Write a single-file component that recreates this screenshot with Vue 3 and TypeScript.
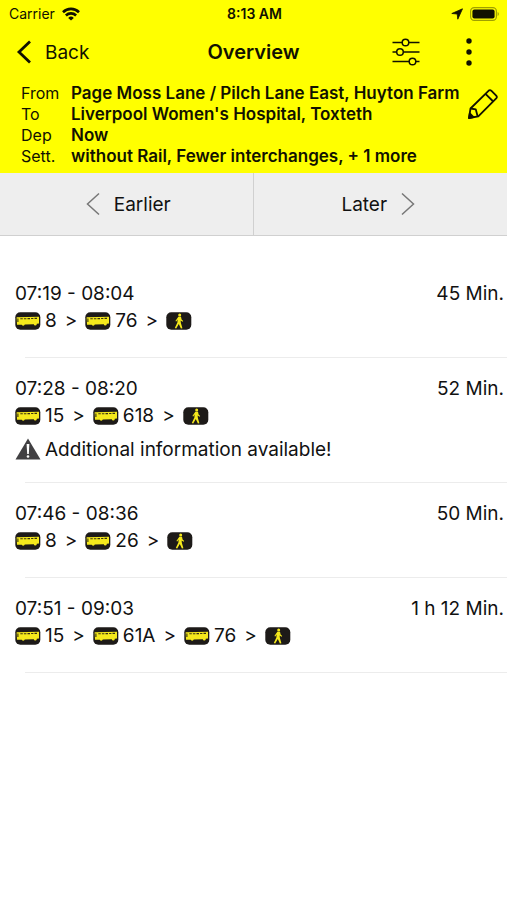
<script setup lang="ts">
interface Leg {
  kind: 'bus' | 'walk'
  line?: string
}
interface Trip {
  times: string
  duration: string
  legs: Leg[]
  notice?: string
}

const bus = (line: string): Leg => ({ kind: 'bus', line })
const walk: Leg = { kind: 'walk' }

const summary = [
  { label: 'From', value: 'Page Moss Lane / Pilch Lane East, Huyton Farm' },
  { label: 'To', value: "Liverpool Women's Hospital, Toxteth" },
  { label: 'Dep', value: 'Now' },
  { label: 'Sett.', value: 'without Rail, Fewer interchanges, + 1 more' },
]

const trips: Trip[] = [
  { times: '07:19 - 08:04', duration: '45 Min.', legs: [bus('8'), bus('76'), walk] },
  {
    times: '07:28 - 08:20',
    duration: '52 Min.',
    legs: [bus('15'), bus('618'), walk],
    notice: 'Additional information available!',
  },
  { times: '07:46 - 08:36', duration: '50 Min.', legs: [bus('8'), bus('26'), walk] },
  { times: '07:51 - 09:03', duration: '1 h 12 Min.', legs: [bus('15'), bus('61A'), bus('76'), walk] },
]
</script>

<template>
  <div class="screen">
    <header class="top">
      <div class="status">
        <div class="status-left">
          <span>Carrier</span>
          <svg width="18" height="14" viewBox="0 0 18 14" fill="none" stroke="#111100" stroke-width="2.6">
            <path d="M1 5.200a11.400 11.400 0 0 1 16 0" />
            <path d="M3.900 8.500a7.300 7.300 0 0 1 10.200 0" />
            <path d="M9 13.600 6.200 10.900a4 4 0 0 1 5.600 0z" fill="#111100" stroke="none" />
          </svg>
        </div>
        <span class="clock">8:13 AM</span>
        <div class="status-right">
          <svg width="12" height="12" viewBox="0 0 12 12"><path d="M11.500.8 6.800 11.200 6.200 6 .8 5.500z" fill="#111100" stroke="#111100" stroke-width=".8" stroke-linejoin="round" /></svg>
          <svg width="30" height="14" viewBox="0 0 30 14">
            <rect x=".6" y=".6" width="25.800" height="12.800" rx="3.600" fill="none" stroke="#a0a000" stroke-width="1.200" />
            <rect x="2.400" y="2.400" width="22.200" height="9.200" rx="2" fill="#111100" />
            <path d="M27.600 5a2.200 2.200 0 0 1 0 4z" fill="#a0a000" />
          </svg>
        </div>
      </div>

      <nav class="bar">
        <button class="back" type="button">
          <svg width="16" height="24" viewBox="0 0 16 24" fill="none" stroke="#111100" stroke-width="2.800">
            <path d="M14 1.500 3 12 14 22.500" />
          </svg>
          <span>Back</span>
        </button>
        <h1>Overview</h1>
        <div class="tools">
          <button type="button" aria-label="Options">
            <svg width="28" height="28" viewBox="0 0 28 28" fill="none" stroke="#111100" stroke-width="1.500">
              <path d="M.5 4.500h9.500M17 4.500h10.500M.5 14h4M11.500 14h16M.5 23.500h16.500M24 23.500h3.500" />
              <circle cx="13.500" cy="4.500" r="3.300" />
              <circle cx="8" cy="14" r="3.300" />
              <circle cx="20.500" cy="23.500" r="3.300" />
            </svg>
          </button>
          <button type="button" aria-label="More">
            <svg width="8" height="28" viewBox="0 0 8 28" fill="#111100">
              <circle cx="4" cy="3" r="2.700" />
              <circle cx="4" cy="14" r="2.700" />
              <circle cx="4" cy="25" r="2.700" />
            </svg>
          </button>
        </div>
      </nav>

      <div class="request">
        <dl>
          <div v-for="row in summary" :key="row.label">
            <dt>{{ row.label }}</dt>
            <dd>{{ row.value }}</dd>
          </div>
        </dl>
        <button type="button" class="edit" aria-label="Edit">
          <svg width="30" height="30" viewBox="0 0 30 30" fill="none" stroke="#111100" stroke-width="1.800" stroke-linejoin="round">
            <path d="M1 29l1.500-9.500L20.500 1.800q1.500-1.300 3 .1l4.700 4.700q1.300 1.400 0 2.800L10.300 27.400z" />
            <path d="M2.500 19.500l5.300.9 1.800 6.800M17.500 4.800l7.700 7.700" />
            <path d="M1 29l.8-4.500 3.700 3.700z" fill="#111100" />
          </svg>
        </button>
      </div>
    </header>

    <div class="shift">
      <button type="button" class="earlier">
        <svg width="14" height="24" viewBox="0 0 14 24" fill="none" stroke="#777" stroke-width="1.500"><path d="M13 1.500 1.500 12 13 22.500" /></svg>
        <span>Earlier</span>
      </button>
      <button type="button" class="later">
        <span>Later</span>
        <svg width="14" height="24" viewBox="0 0 14 24" fill="none" stroke="#777" stroke-width="1.500"><path d="M1 1.500 12.500 12 1 22.500" /></svg>
      </button>
    </div>

    <ul class="trips">
      <li v-for="trip in trips" :key="trip.times">
        <div class="headline">
          <span>{{ trip.times }}</span>
          <span>{{ trip.duration }}</span>
        </div>
        <div class="legs">
          <template v-for="(leg, i) in trip.legs" :key="i">
            <span v-if="i > 0" class="sep">&gt;</span>
            <svg v-if="leg.kind === 'bus'" width="26" height="18" viewBox="0 0 26 18" role="img" aria-label="Bus">
              <rect x=".3" y=".3" width="25" height="17.400" rx="5" fill="#1d1a18" />
              <path d="M1.600 5.300 24 4.800V11.400l-2.200.4a1.500 1.500 0 0 1-3 .4l-9 .4a1.600 1.600 0 0 1-3 .1L2 12.700z" fill="#f5e91c" />
              <path d="M2.900 6.600v3.400M5.300 6.800h2.500M8.900 6.700h2.500M12.500 6.600h2.500M16.100 6.500h2.300M19.500 6.400h2.500" stroke="#38330f" stroke-width="1.100" fill="none" />
            </svg>
            <svg v-else width="26" height="18" viewBox="0 0 26 18" role="img" aria-label="Walk">
              <rect x=".3" y=".3" width="25" height="17.400" rx="5" fill="#1d1a18" />
              <circle cx="13.700" cy="3" r="1.500" fill="#f5e91c" />
              <path d="M12.300 4.700h2.700l.6 2.700 1.600 1.600-.6.800-2-1.400.3 2.600 1.500 5.300-1.500.3-2.100-4.600-2.600 4.500-1.400-.5 2.600-5.500.2-2.900-1.300 2-.9-.5z" fill="#f5e91c" />
            </svg>
            <span v-if="leg.line" class="line">{{ leg.line }}</span>
          </template>
        </div>
        <div v-if="trip.notice" class="notice">
          <svg width="26" height="22" viewBox="0 0 26 22">
            <path d="M13 .5 25.500 21.500H.5z" fill="#414042" />
            <path d="M11.600 6h2.800l-.6 10h-1.600z" fill="#fff" />
            <circle cx="13" cy="18.500" r="1.300" fill="#fff" />
          </svg>
          <span>{{ trip.notice }}</span>
        </div>
      </li>
    </ul>
  </div>
</template>

<style>
body {
  margin: 0;
  background: #fff;
}
</style>

<style scoped>
.screen {
  font-family: Inter, "Liberation Sans", sans-serif;
  font-size: 19px;
  color: #111;
}
button {
  display: flex;
  align-items: center;
  margin: 0;
  padding: 0;
  border: 0;
  background: none;
  font: inherit;
  color: inherit;
}
svg {
  display: block;
  flex: none;
}
.top {
  background: #ff0;
  color: #111100;
  padding-bottom: 6px;
}
.status,
.bar {
  display: grid;
  grid-template-columns: 1fr auto 1fr;
  align-items: center;
}
.status {
  height: 27px;
  padding: 0 7px 0 9px;
  font-size: 14px;
}
.status-left,
.status-right {
  display: flex;
  align-items: center;
  gap: 7px;
}
.status-right {
  justify-content: flex-end;
}
.clock {
  font-weight: 600;
}
.bar {
  height: 50px;
  padding: 0 34px 0 16px;
}
.back {
  gap: 13px;
  justify-self: start;
}
h1 {
  margin: 0;
  padding-left: 18px;
  font-size: 20px;
  font-weight: 600;
}
.tools {
  display: flex;
  justify-content: flex-end;
  gap: 45px;
}
.request {
  display: flex;
  align-items: flex-start;
  justify-content: space-between;
  padding: 6px 9px 0 21px;
  font-size: 16px;
  line-height: 21px;
}
dl {
  margin: 0;
}
dl > div {
  display: grid;
  grid-template-columns: 50px 1fr;
}
dd {
  margin: 0;
  font-size: 17px;
  font-weight: 600;
  white-space: nowrap;
}
.edit {
  margin-top: 6px;
}
.shift {
  display: grid;
  grid-template-columns: 1fr 1fr;
  background: #eee;
  border-bottom: 1px solid #d0d0d0;
}
.shift button {
  height: 62px;
  justify-content: center;
  gap: 14px;
}
.earlier {
  padding-left: 4px;
  border-right: 1px solid #d0d0d0;
}
.later {
  padding-right: 4px;
}
.trips {
  list-style: none;
  margin: 0;
  padding: 27px 0 0;
  line-height: 27px;
}
li {
  padding: 17px 3px 24px 15px;
  background: linear-gradient(#ececec, #ececec) no-repeat 25px 100% / 100% 1px;
}
.headline {
  display: flex;
  justify-content: space-between;
}
.legs,
.notice {
  display: flex;
  align-items: center;
}
.line {
  margin-left: 4px;
}
.sep {
  margin: 0 8px;
}
.notice {
  gap: 4px;
  margin-top: 10px;
  height: 20px;
}
</style>
